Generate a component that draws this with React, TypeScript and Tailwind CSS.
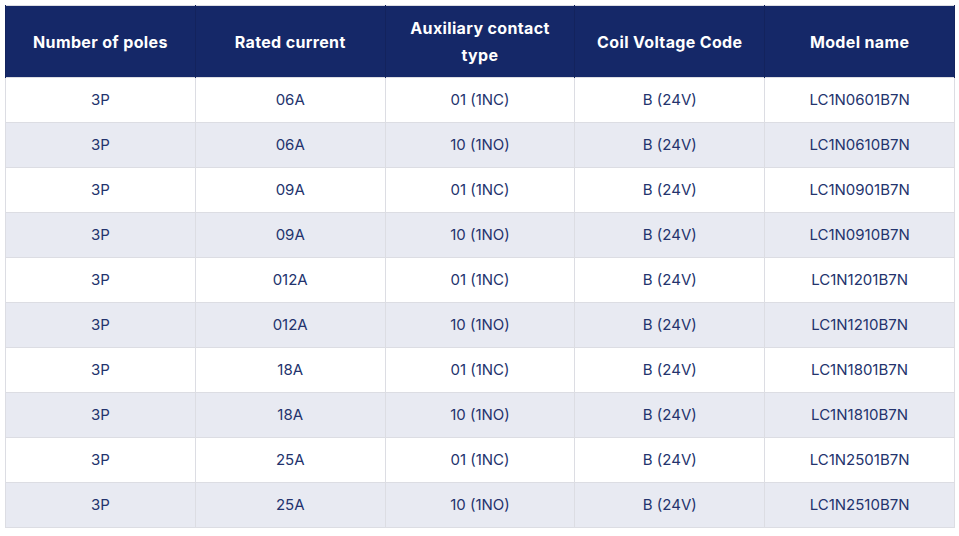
import React from "react";

const headers = ["Number of poles", "Rated current", "Auxiliary contact type", "Coil Voltage Code", "Model name"];

const rows = [
  ["3P", "06A", "01 (1NC)", "B (24V)", "LC1N0601B7N"],
  ["3P", "06A", "10 (1NO)", "B (24V)", "LC1N0610B7N"],
  ["3P", "09A", "01 (1NC)", "B (24V)", "LC1N0901B7N"],
  ["3P", "09A", "10 (1NO)", "B (24V)", "LC1N0910B7N"],
  ["3P", "012A", "01 (1NC)", "B (24V)", "LC1N1201B7N"],
  ["3P", "012A", "10 (1NO)", "B (24V)", "LC1N1210B7N"],
  ["3P", "18A", "01 (1NC)", "B (24V)", "LC1N1801B7N"],
  ["3P", "18A", "10 (1NO)", "B (24V)", "LC1N1810B7N"],
  ["3P", "25A", "01 (1NC)", "B (24V)", "LC1N2501B7N"],
  ["3P", "25A", "10 (1NO)", "B (24V)", "LC1N2510B7N"],
];

export default function App() {
  return (
    <div className="min-h-screen bg-white p-[5px] font-['Inter','Open_Sans',sans-serif]">
      <table className="w-[950px] table-fixed border-collapse border border-[#dcdde3]">
        <thead>
          <tr className="h-[72px] bg-[#152868]">
            {headers.map((h) => (
              <th
                key={h}
                className={`border-x border-[#13235d] pt-[1px] text-center text-[16px] font-bold leading-[27px] tracking-[0.35px] text-white ${
                  h.startsWith("Auxiliary") ? "px-6" : "px-3"
                }`}
              >
                {h}
              </th>
            ))}
          </tr>
        </thead>
        <tbody>
          {rows.map((r, i) => (
            <tr key={i} className={`h-[45px] ${i % 2 === 1 ? "bg-[#e8eaf2]" : "bg-white"}`}>
              {r.map((c, j) => (
                <td
                  key={j}
                  className="border border-[#dcdde3] text-center text-[15px] font-normal text-[#23336d]"
                >
                  {c}
                </td>
              ))}
            </tr>
          ))}
        </tbody>
      </table>
    </div>
  );
}
